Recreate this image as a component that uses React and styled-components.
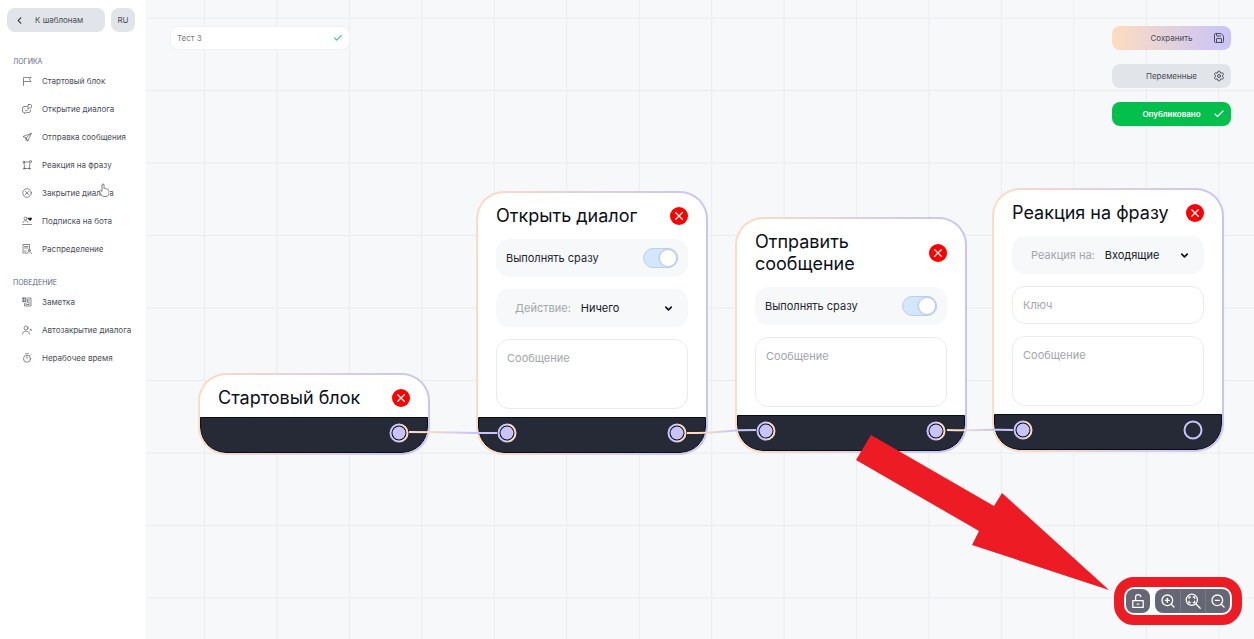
import React from "react";
import styled, { createGlobalStyle, css } from "styled-components";
import { Check, ChevronDown, ChevronLeft, Save, Settings, X, ZoomIn, ZoomOut } from "lucide-react";

const GlobalStyle = createGlobalStyle`
  :root {
    --color-peach: #fddcc0;
    --color-lavender: #c8c4fa;
    --color-gray: #e1e4e9;
    --color-canvas: #f7f8fa;
    --color-text: #4a4d55;
    --color-dark: #262a36;
    --color-red: #ed1c24;
  }

  * {
    box-sizing: border-box;
  }

  body {
    margin: 0;
    font-family: Inter, "Liberation Sans", sans-serif;
    color: var(--color-text);
  }

  button, input, select, textarea {
    font-family: inherit;
    color: inherit;
  }
`;

const Page = styled.div`
  display: flex;
  min-height: 100vh;
`;

const Sidebar = styled.aside`
  flex: none;
  width: 146px;
  padding: 8px 6px 8px 7px;
  background-color: #fff;
`;

const SidebarHead = styled.div`
  display: flex;
  gap: 6px;
  margin-bottom: 25px;
`;

const baseButton = css`
  display: flex;
  align-items: center;
  height: 24px;
  padding: 0;
  border: none;
  border-radius: 8px;
  font-size: 8px;
  cursor: pointer;
`;

const BackButton = styled.button`
  ${baseButton}
  width: 98px;
  padding-left: 7px;
  gap: 10px;
  background-color: var(--color-gray);
`;

const LangButton = styled.button`
  ${baseButton}
  width: 24px;
  justify-content: center;
  background-color: var(--color-gray);
`;

const Section = styled.section`
  margin-bottom: 15px;
`;

const SectionTitle = styled.h2`
  margin: 0 0 1px 6px;
  font-size: 7px;
  line-height: 9px;
  font-weight: 400;
  text-transform: uppercase;
  color: #5d6880;
`;

const List = styled.ul`
  margin: 0;
  padding: 0;
  list-style: none;
`;

const ListItem = styled.li`
  position: relative;
`;

const BlockButton = styled.button`
  display: flex;
  align-items: center;
  gap: 10px;
  width: 100%;
  height: 28px;
  padding: 0 0 0 15px;
  border: none;
  background: none;
  font-size: 8px;
  white-space: nowrap;
  cursor: pointer;

  svg {
    flex: none;
  }
`;

const Pointer = styled.svg`
  position: absolute;
  left: 92px;
  top: 4px;
`;

const Canvas = styled.main`
  position: relative;
  flex: 1;
  overflow: hidden;
  background-color: var(--color-canvas);
`;

const Layer = styled.svg`
  position: absolute;
  inset: 0;
  width: 100%;
  height: 100%;
  pointer-events: none;
`;

const TopBar = styled.div`
  position: relative;
  display: flex;
  justify-content: space-between;
  align-items: flex-start;
  padding: 26px 23px 0 24px;
`;

const NameField = styled.label`
  display: flex;
  align-items: center;
  width: 180px;
  height: 24px;
  padding: 0 6px;
  border: 1px solid #f0f1f4;
  border-radius: 8px;
  background-color: #fff;
`;

const NameInput = styled.input`
  flex: 1;
  min-width: 0;
  padding: 0;
  border: none;
  outline: none;
  background: none;
  font-size: 8px;
  color: #777a82;
`;

const Actions = styled.div`
  display: flex;
  flex-direction: column;
  gap: 14px;
  width: 119px;
`;

const actionColors = {
  save: css`
    background: linear-gradient(90deg, var(--color-peach), var(--color-lavender));
  `,
  plain: css`
    background: var(--color-gray);
  `,
  success: css`
    background: #03bf4b;
    color: #fff;
    font-weight: 600;
  `,
};

const ActionButton = styled.button`
  ${baseButton}
  padding: 0 6px 0 18px;
  ${({ $variant }) => actionColors[$variant]}

  span {
    flex: 1;
  }
`;

const Card = styled.article`
  position: absolute;
  left: ${({ $x }) => $x}px;
  top: ${({ $y }) => $y}px;
  width: 232px;
  border: 2px solid transparent;
  border-radius: 28px;
  background:
    linear-gradient(#fff, #fff) padding-box,
    linear-gradient(90deg, var(--color-peach), var(--color-lavender)) border-box;
  overflow: hidden;
`;

const CardBody = styled.div`
  display: flex;
  flex-direction: column;
  gap: 12px;
  padding: 12px 18px 8px;
`;

const CardHead = styled.header`
  display: flex;
  justify-content: space-between;
  align-items: center;
`;

const CardTitle = styled.h3`
  margin: 0;
  font-size: 18px;
  line-height: 22px;
  font-weight: 400;
  color: #0c0f18;
`;

const RemoveButton = styled.button`
  display: flex;
  align-items: center;
  justify-content: center;
  flex: none;
  width: 18px;
  height: 18px;
  padding: 0;
  border: none;
  border-radius: 50%;
  background-color: #fe0000;
  color: #fff;
`;

const Row = styled.label`
  display: flex;
  align-items: center;
  justify-content: space-between;
  height: 38px;
  padding: 0 10px;
  border-radius: 13px;
  background-color: var(--color-canvas);
  font-size: 11px;
  color: #23262f;
`;

const Switch = styled.input`
  appearance: none;
  display: flex;
  width: 35px;
  height: 20px;
  margin: 0;
  padding: 1px;
  border: 1px solid #bed0e6;
  border-radius: 10px;
  background-color: #d2e7fc;

  &::after {
    content: "";
    width: 16px;
    height: 16px;
    border-radius: 50%;
    background-color: #fff;
    box-shadow: 0 0 2px 1px #b4c4d8;
  }

  &:checked::after {
    margin-left: auto;
  }
`;

const SelectRow = styled(Row)`
  gap: 10px;
  padding: 0 14px 0 19px;
  color: #a3a5aa;

  svg {
    color: #0c0f18;
  }
`;

const Select = styled.select`
  appearance: none;
  flex: 1;
  min-width: 0;
  padding: 0;
  border: none;
  outline: none;
  background: none;
  font-size: 11px;
  color: #14171f;
`;

const fieldStyle = css`
  display: block;
  width: 100%;
  padding: 10px;
  border: 1px solid #e9e9f0;
  border-radius: 13px;
  outline: none;
  background-color: #fff;
  font-size: 11px;
  line-height: 16px;

  &::placeholder {
    color: #a3a5aa;
    opacity: 1;
  }
`;

const TextInput = styled.input`
  ${fieldStyle}
  height: 38px;
`;

const TextArea = styled.textarea`
  ${fieldStyle}
  height: 70px;
  resize: none;
`;

const CardFoot = styled.footer`
  display: flex;
  justify-content: ${({ $single }) => ($single ? "flex-end" : "space-between")};
  height: 36px;
  padding: 5px 18px;
  border: 1px solid #080d18;
  border-radius: 0 0 26px 26px;
  background-color: var(--color-dark);
`;

const Tools = styled.div`
  position: absolute;
  right: 12px;
  bottom: 14px;
  display: flex;
  gap: 5px;
  padding: 2px;
  border: 10px solid var(--color-red);
  border-radius: 20px;
  background-color: #fff;
`;

const ToolGroup = styled.div`
  display: flex;
  border-radius: 8px;
  background-color: #656774;
  overflow: hidden;
`;

const ToolButton = styled.button`
  display: flex;
  align-items: center;
  justify-content: center;
  width: ${({ $wide }) => ($wide ? 25 : 24)}px;
  height: 24px;
  padding: 0;
  border: none;
  background: none;
  color: #fff;

  & + & {
    border-left: 1px solid #777987;
  }
`;

const Icon = ({ size = 10, width = 1.3, children }) => (
  <svg width={size} height={size} viewBox="0 0 20 20" fill="none" stroke="currentColor"
       strokeWidth={width} strokeLinecap="round" strokeLinejoin="round" aria-hidden="true">
    {children}
  </svg>
);

const icons = {
  flag: <Icon><path d="M3 19V3h15l-3 4 3 4H3"/></Icon>,
  dialog: (
    <Icon>
      <path d="M10 5H4a3 3 0 0 0-3 3v6a3 3 0 0 0 3 3h1v2l4-2h5a3 3 0 0 0 3-3v-2M6 12c2 2 4 2 6 0"/>
      <path d="M13 1h4a2 2 0 0 1 2 2v3a2 2 0 0 1-2 2h-2l-3 2V3a2 2 0 0 1 1-2z"/>
    </Icon>
  ),
  send: <Icon><path d="M18 3 2 9l6 3 3 6zM18 3l-10 9M8 12v5l2-2"/></Icon>,
  reaction: (
    <Icon>
      <path d="M5 4h10M4 5l1 10M16 6l-1 9M6 17h7"/>
      <circle cx="3.500" cy="4" r="1.500"/>
      <circle cx="17" cy="3" r="2"/>
      <circle cx="4" cy="17" r="1.500"/>
      <circle cx="15" cy="17" r="1.500"/>
    </Icon>
  ),
  close: (
    <Icon>
      <circle cx="10" cy="10" r="8.500"/>
      <path d="m6.500 6.500 7 7M13.500 6.500l-7 7"/>
    </Icon>
  ),
  subscribe: (
    <Icon>
      <circle cx="7" cy="5" r="3"/>
      <path d="M2 13c0-5 10-5 10 0M1 17h18"/>
      <path d="M16 9l-3-3c-1-3 2-3 3-1 1-2 4-2 3 1z" fill="#111" stroke="#111"/>
    </Icon>
  ),
  distribute: (
    <Icon>
      <path d="M9 18H2V1h13v8M5 5h7M5 8h7M5 14h3"/>
      <circle cx="14.500" cy="12.500" r="2"/>
      <path d="M10 19c1-5 8-5 9 0"/>
    </Icon>
  ),
  note: (
    <Icon>
      <path d="M1 2h7v7H1zM3 2v7M6 2v7M11 2h7v16H5v-5M14 5v9M11 5v6M8 12v3h6"/>
    </Icon>
  ),
  autoClose: (
    <Icon>
      <circle cx="8" cy="6" r="4"/>
      <path d="M1 18c0-8 14-8 14 0M16 8l3 3M19 8l-3 3"/>
    </Icon>
  ),
  timer: (
    <Icon>
      <circle cx="10" cy="11.500" r="7"/>
      <path d="M7 1.500h6M10 7.500v4M15.500 5l1.500-1.500"/>
    </Icon>
  ),
};

const sections = [
  {
    title: "Логика",
    items: [
      { icon: "flag", label: "Стартовый блок" },
      { icon: "dialog", label: "Открытие диалога" },
      { icon: "send", label: "Отправка сообщения" },
      { icon: "reaction", label: "Реакция на фразу" },
      { icon: "close", label: "Закрытие диалога", hovered: true },
      { icon: "subscribe", label: "Подписка на бота" },
      { icon: "distribute", label: "Распределение" },
    ],
  },
  {
    title: "Поведение",
    items: [
      { icon: "note", label: "Заметка" },
      { icon: "autoClose", label: "Автозакрытие диалога" },
      { icon: "timer", label: "Нерабочее время" },
    ],
  },
];

const nodes = [
  { id: "start", x: 52, y: 373, title: "Стартовый блок", fields: [] },
  {
    id: "open", x: 330, y: 191, title: "Открыть диалог", fields: [
      { type: "switch", label: "Выполнять сразу" },
      { type: "select", label: "Действие:", value: "Ничего" },
      { type: "textarea", label: "Сообщение" },
    ],
  },
  {
    id: "send", x: 589, y: 217, title: "Отправить сообщение", fields: [
      { type: "switch", label: "Выполнять сразу" },
      { type: "textarea", label: "Сообщение" },
    ],
  },
  {
    id: "reaction", x: 846, y: 188, title: "Реакция на фразу", fields: [
      { type: "select", label: "Реакция на:", value: "Входящие" },
      { type: "input", label: "Ключ" },
      { type: "textarea", label: "Сообщение" },
    ],
  },
];

const edges = [
  "M263 432C300 432 312 433 351 433",
  "M541 433C580 433 575 430 610 430",
  "M801 430C832 431 840 429 867 430",
];

const Field = ({ type, label, value }) => {
  switch (type) {
    case "switch":
      return <Row>{label}<Switch type="checkbox" defaultChecked/></Row>;
    case "select":
      return (
        <SelectRow>
          {label}
          <Select defaultValue={value}><option>{value}</option></Select>
          <ChevronDown size={11} strokeWidth={3.5}/>
        </SelectRow>
      );
    case "input":
      return <TextInput placeholder={label} aria-label={label}/>;
    default:
      return <TextArea placeholder={label} aria-label={label}/>;
  }
};

const Port = ({ filled }) => (
  <svg width="20" height="20" viewBox="0 0 20 20" aria-hidden="true">
    <circle cx="10" cy="10" r="8.500" fill={filled ? "#080d18" : "#262a36"}
            stroke={filled ? "url(#ring)" : "#c8c4fa"} strokeWidth="2"/>
    {filled && <circle cx="10" cy="10" r="6.500" fill="#c8c4fa"/>}
  </svg>
);

const Node = ({ id, x, y, title, fields }) => (
  <Card $x={x} $y={y}>
    <CardBody>
      <CardHead>
        <CardTitle>{title}</CardTitle>
        <RemoveButton aria-label="Удалить"><X size={14} strokeWidth={2}/></RemoveButton>
      </CardHead>
      {fields.map(field => <Field key={field.label} {...field}/>)}
    </CardBody>
    <CardFoot $single={id === "start"}>
      {id !== "start" && <Port filled/>}
      <Port filled={id !== "reaction"}/>
    </CardFoot>
  </Card>
);

const App = () => (
  <>
    <GlobalStyle/>
    <Page>
      <Sidebar>
        <SidebarHead>
          <BackButton><ChevronLeft size={11} strokeWidth={2.5}/>К шаблонам</BackButton>
          <LangButton>RU</LangButton>
        </SidebarHead>
        {sections.map(({ title, items }) => (
          <Section key={title}>
            <SectionTitle>{title}</SectionTitle>
            <List>
              {items.map(({ icon, label, hovered }) => (
                <ListItem key={label}>
                  <BlockButton>{icons[icon]}{label}</BlockButton>
                  {hovered && (
                    <Pointer width="10" height="15" viewBox="0 0 20 30" aria-hidden="true">
                      <path d="M6 17V4c0-3 4-3 4 0v7c2-1 3 0 4 1 2-1 3 0 3 1 2 0 3 1 3 3v5c0 3-3 6-6 6H9c-3 0-6-6-8-9-1-3 2-4 5-1z"
                            fill="#fff" stroke="#555" strokeWidth="1.500"/>
                    </Pointer>
                  )}
                </ListItem>
              ))}
            </List>
          </Section>
        ))}
      </Sidebar>

      <Canvas>
        <Layer aria-hidden="true">
          <defs>
            <pattern id="grid" x="58" y="17.500" width="72.450" height="72.500" patternUnits="userSpaceOnUse">
              <path d="M.5 0v73M0 .5h73" stroke="#ebecef" fill="none"/>
            </pattern>
            <linearGradient id="ring">
              <stop offset="0.300" stopColor="#c8c4fa"/>
              <stop offset="0.800" stopColor="#fddcc0"/>
            </linearGradient>
          </defs>
          <rect width="100%" height="100%" fill="url(#grid)"/>
        </Layer>

        <TopBar>
          <NameField>
            <NameInput defaultValue="Тест 3" aria-label="Название"/>
            <Check size={10} strokeWidth={3} color="#4fc88a"/>
          </NameField>
          <Actions>
            <ActionButton $variant="save"><span>Сохранить</span><Save size={12} strokeWidth={2}/></ActionButton>
            <ActionButton $variant="plain"><span>Переменные</span><Settings size={12} strokeWidth={2}/></ActionButton>
            <ActionButton $variant="success"><span>Опубликовано</span><Check size={12} strokeWidth={2.5}/></ActionButton>
          </Actions>
        </TopBar>

        {nodes.map(node => <Node key={node.id} {...node}/>)}

        <Layer aria-hidden="true">
          <defs>
            <linearGradient id="edge">
              <stop offset="0.200" stopColor="#fddcc0"/>
              <stop offset="0.700" stopColor="#c8c4fa"/>
            </linearGradient>
          </defs>
          {edges.map(d => <path key={d} d={d} fill="none" stroke="url(#edge)" strokeWidth="2"/>)}
          <path d="M725 435 848 506 856 493 963 590 826 545 833 531 710 460z" fill="#ed1c24"/>
        </Layer>

        <Tools>
          <ToolGroup>
            <ToolButton aria-label="Заблокировать">
              <Icon size={16} width={1.6}>
                <path d="M3.500 9.500h13v8.500h-13zM7 9.500V5c0-4 6-4 6.500-.500M9 13.800h2"/>
              </Icon>
            </ToolButton>
          </ToolGroup>
          <ToolGroup>
            <ToolButton $wide aria-label="Приблизить"><ZoomIn size={16} strokeWidth={2}/></ToolButton>
            <ToolButton $wide aria-label="Показать всё">
              <Icon size={16} width={1.6}>
                <circle cx="8.500" cy="8.500" r="7"/>
                <path d="m14 14 5 5"/>
                <path d="M5 7.200V5h2.200M9.800 5H12v2.200M12 9.800V12H9.800M7.200 12H5V9.800" strokeLinecap="butt"/>
              </Icon>
            </ToolButton>
            <ToolButton $wide aria-label="Отдалить"><ZoomOut size={16} strokeWidth={2}/></ToolButton>
          </ToolGroup>
        </Tools>
      </Canvas>
    </Page>
  </>
);

export default App;
